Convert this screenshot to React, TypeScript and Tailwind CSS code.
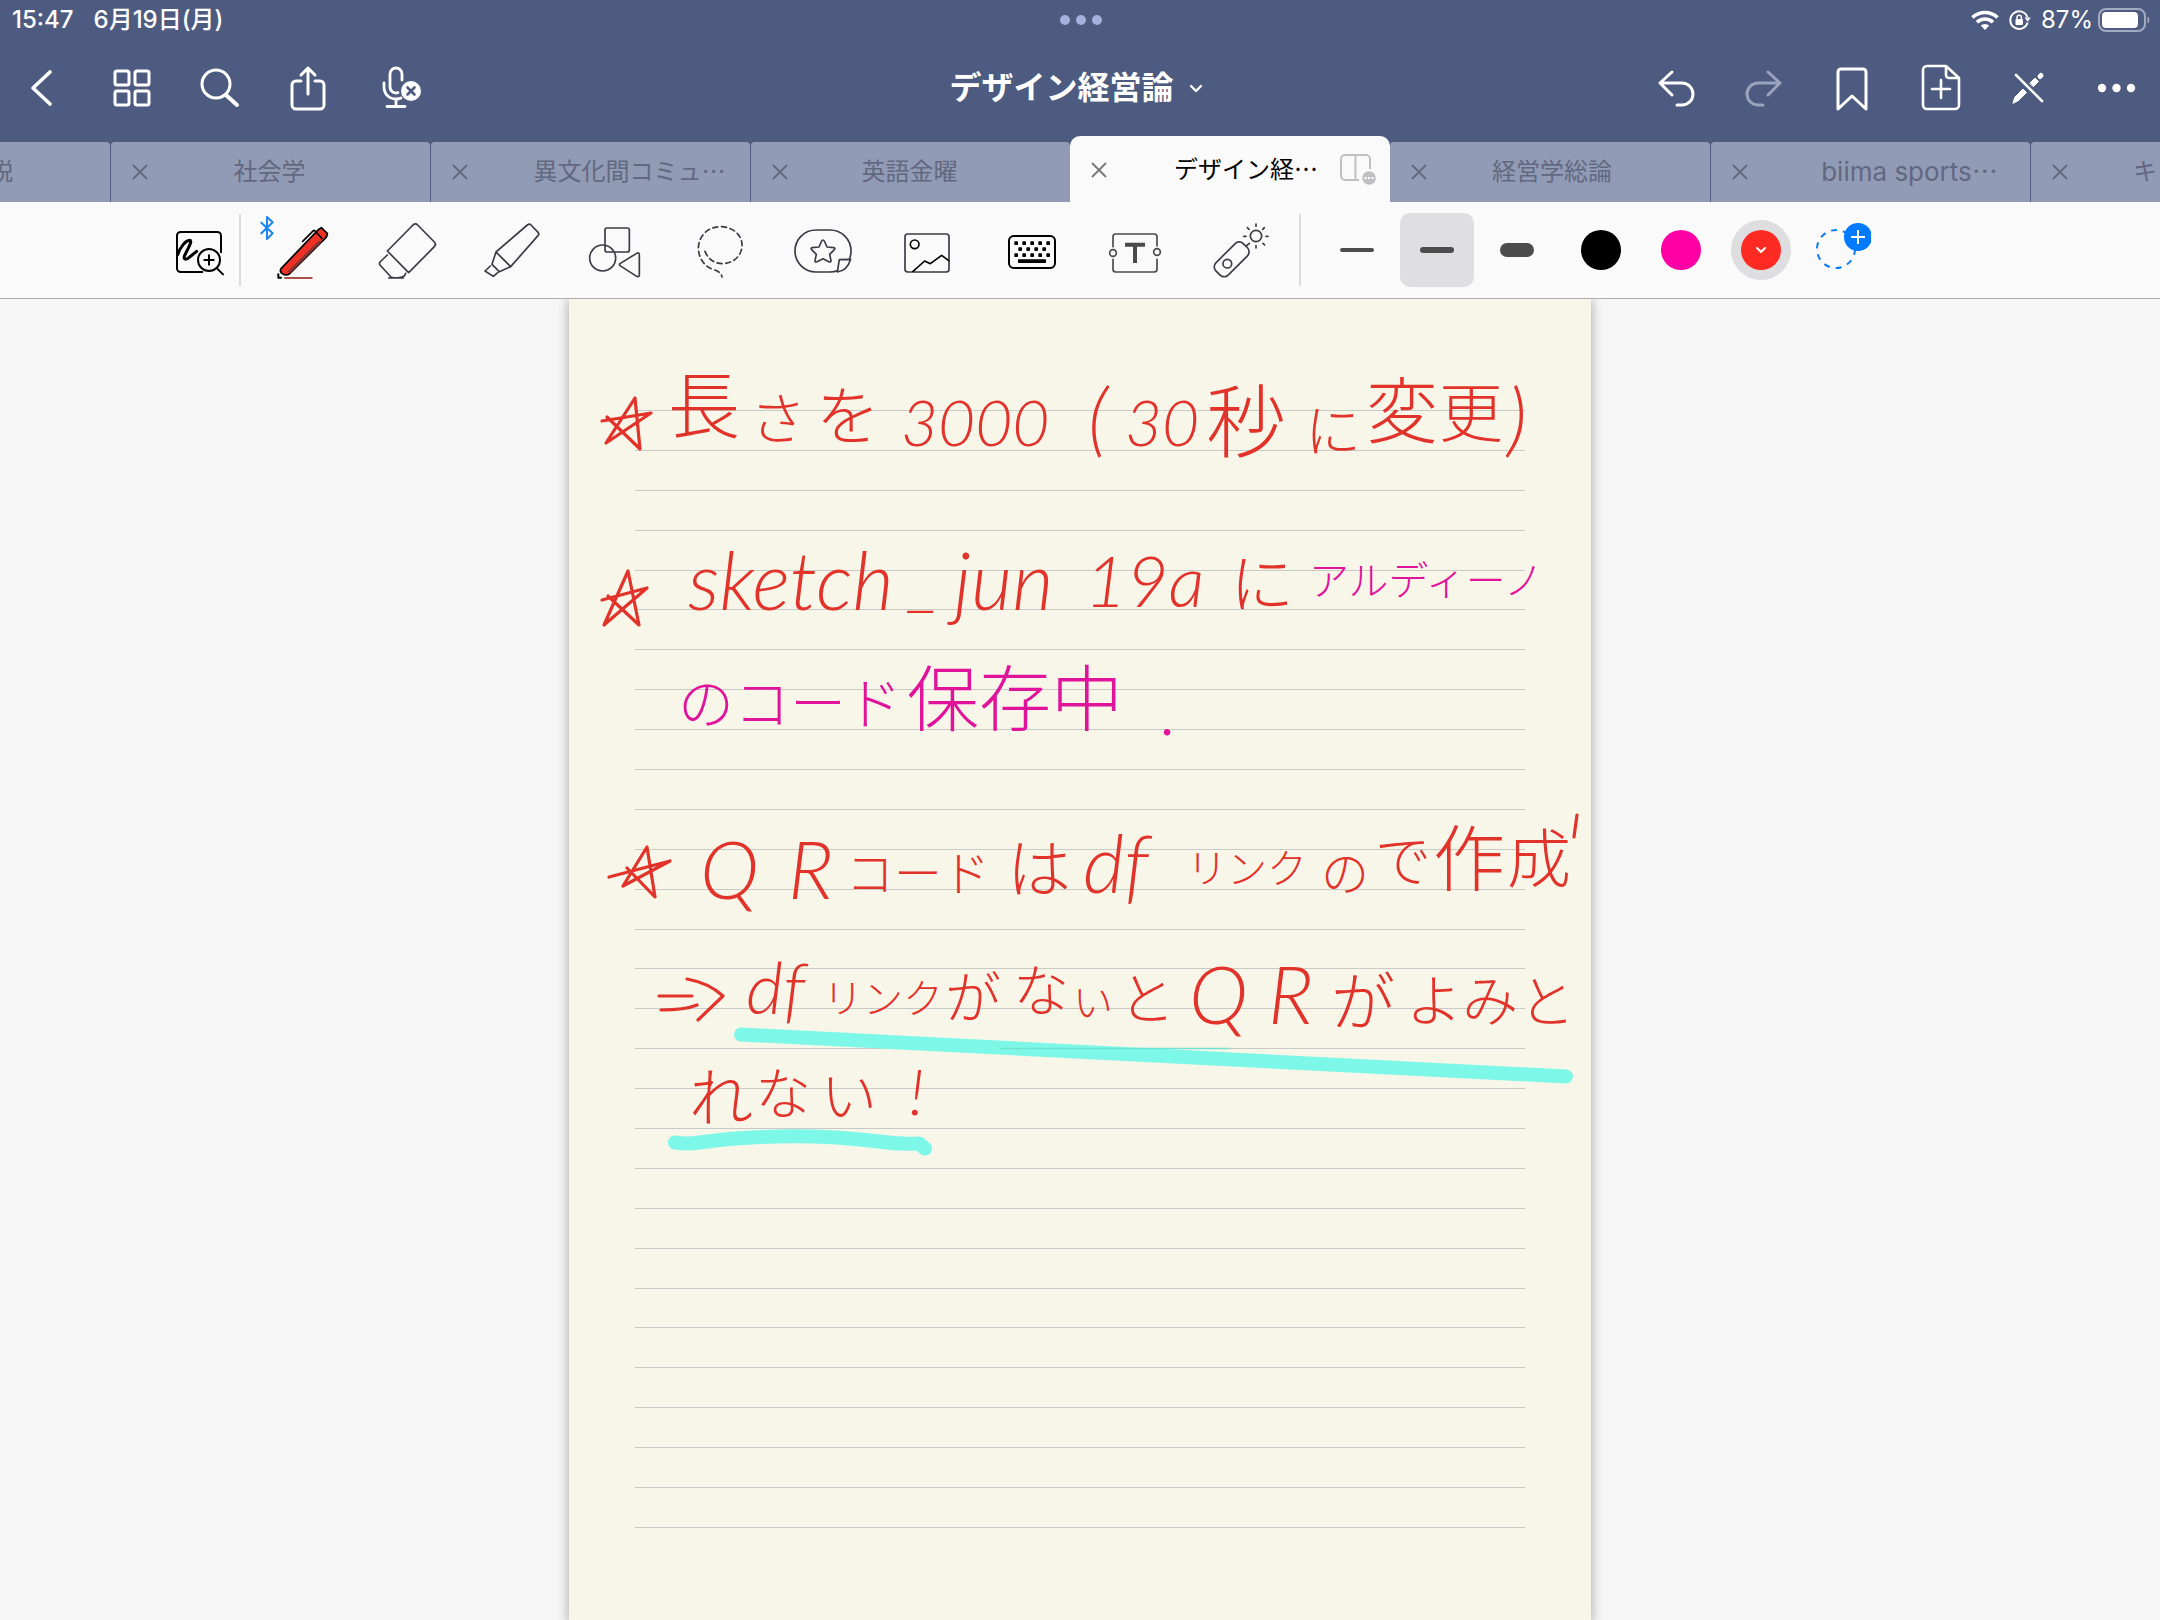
import React from "react";

const JP = "font-['Inter','Noto_Sans_CJK_JP',sans-serif]";

function HeaderButton({ label, children }: { label: string; children: React.ReactNode }) {
  return (
    <button aria-label={label} className="flex h-14 w-[88px] items-center justify-center text-white">
      <svg
        className="size-14"
        viewBox="0 0 56 56"
        fill="none"
        stroke="currentColor"
        strokeWidth="3"
        strokeLinecap="round"
        strokeLinejoin="round"
      >
        {children}
      </svg>
    </button>
  );
}

function StatusBar() {
  return (
    <div className="grid h-10 grid-cols-3 items-center pr-[10px] pl-3 text-[24px] leading-10 font-medium text-white">
      <div className="flex gap-5">
        <span>15:47</span>
        <span>6月19日(月)</span>
      </div>
      <div className="flex justify-center gap-[6px]">
        <i className="size-[10px] rounded-full bg-[#a5b1da]" />
        <i className="size-[10px] rounded-full bg-[#a5b1da]" />
        <i className="size-[10px] rounded-full bg-[#a5b1da]" />
      </div>
      <div className="flex items-center justify-end">
        <svg className="mr-[10px] h-5 w-7" viewBox="0 0 28 20" fill="none" stroke="white" strokeWidth="3.6">
          <path d="M1.5 7.5a18 18 0 0 1 25 0" />
          <path d="M6 12.3a11.5 11.5 0 0 1 16 0" />
          <path d="M14 20l-4.2-4.4a6 6 0 0 1 8.4 0z" fill="white" stroke="none" />
        </svg>
        <svg className="mr-[10px] h-6 w-[22px]" viewBox="0 0 22 24" fill="none" stroke="white" strokeWidth="2">
          <path d="M18.6 14.5a8.8 8.8 0 1 1-.2-5.4" />
          <path d="M15.5 9.5h6.2l-2.9 4.2z" fill="white" stroke="none" />
          <rect x="6.5" y="11" width="7.4" height="6" rx="1" fill="white" stroke="none" />
          <path d="M8 11.5V9.4a2.2 2.2 0 0 1 4.4 0v2.1" strokeWidth="1.5" />
        </svg>
        <span className="font-normal">87%</span>
        <svg className="ml-[5px] h-6 w-[52px]" viewBox="0 0 52 24">
          <rect x="1" y="1" width="46" height="22" rx="7" fill="none" stroke="#a3abc2" strokeWidth="2" />
          <rect x="4" y="4" width="36" height="16" rx="4" fill="white" />
          <path d="M49.500 8.500c2.600 1 2.600 6 0 7z" fill="#a3abc2" />
        </svg>
      </div>
    </div>
  );
}

function Header() {
  return (
    <div className="flex h-24 items-center justify-between text-white">
      <div className="flex flex-1">
        <HeaderButton label="戻る">
          <path d="M34 12L17 28l17 16" strokeWidth="3.6" />
        </HeaderButton>
        <HeaderButton label="サムネイル">
          <rect x="11" y="11" width="14" height="14" rx="2" />
          <rect x="31" y="11" width="14" height="14" rx="2" />
          <rect x="11" y="31" width="14" height="14" rx="2" />
          <rect x="31" y="31" width="14" height="14" rx="2" />
        </HeaderButton>
        <HeaderButton label="検索">
          <circle cx="24" cy="24" r="14" />
          <path d="M34 35l11 10" strokeWidth="4" />
        </HeaderButton>
        <HeaderButton label="共有">
          <path d="M21 21h-5a4 4 0 0 0-4 4v20a4 4 0 0 0 4 4h24a4 4 0 0 0 4-4V25a4 4 0 0 0-4-4h-5M28 34V8M21 15l7-7 7 7" />
        </HeaderButton>
        <HeaderButton label="録音">
          <path d="M34 20v-6a6 6 0 0 0-12 0v13a6 6 0 0 0 8 5.600M16 23v4c0 7 5 12 12 12 2 0 4-.4 5-1M28 39v7M19 46.500h18" strokeWidth="2.800" />
          <circle cx="43" cy="31" r="10" fill="white" stroke="none" />
          <path d="M39.500 27.500l7 7M46.500 27.500l-7 7" stroke="#4e5b80" strokeWidth="2.600" />
        </HeaderButton>
      </div>
      <button className="mr-2 flex items-center gap-[15px]">
        <span className="text-[32px] leading-10 font-bold">デザイン経営論</span>
        <svg className="h-3 w-[14px]" viewBox="0 0 14 12" fill="none" stroke="white" strokeWidth="2.400" strokeLinecap="round" strokeLinejoin="round">
          <path d="M2 4l5 5 5-5" />
        </svg>
      </button>
      <div className="flex flex-1 justify-end">
        <HeaderButton label="取り消す">
          <path d="M24 12L12 23l12 12M12 23h22a11 11 0 0 1 0 22h-5" />
        </HeaderButton>
        <HeaderButton label="やり直す">
          <path d="M32 12l12 11-12 12M44 23H22a11 11 0 0 0 0 22h5" stroke="#9aa3bd" />
        </HeaderButton>
        <HeaderButton label="ブックマーク">
          <path d="M14 49V12a3 3 0 0 1 3-3h22a3 3 0 0 1 3 3v37L28 36z" />
        </HeaderButton>
        <HeaderButton label="ページを追加">
          <path d="M34 6H15a4 4 0 0 0-4 4v35a4 4 0 0 0 4 4h28a4 4 0 0 0 4-4V18zM34 6v9a3 3 0 0 0 3 3h10M29 20v18M20 29h18" strokeWidth="2.600" />
        </HeaderButton>
        <HeaderButton label="閲覧モード">
          <path d="M16 15l26 26" strokeWidth="2.600" />
          <path d="M13 43l2-6 8-8 3.500 3.500-8 8zM30 23l5-5 3.500 3.500-5 5z" fill="white" stroke="white" strokeWidth="1" />
          <path d="M40 16.500l1-1" strokeWidth="5" />
        </HeaderButton>
        <HeaderButton label="その他">
          <g fill="white" stroke="none">
            <circle cx="14" cy="28" r="4.200" />
            <circle cx="28.500" cy="28" r="4.200" />
            <circle cx="43" cy="28" r="4.200" />
          </g>
        </HeaderButton>
      </div>
    </div>
  );
}

function CloseIcon() {
  return (
    <button aria-label="閉じる" className="flex h-[60px] w-[58px] shrink-0 items-center justify-center">
      <svg className="size-4" viewBox="0 0 16 16" stroke="currentColor" strokeWidth="1.800">
        <path d="M1 1l14 14M15 1L1 15" />
      </svg>
    </button>
  );
}

const idle =
  "flex h-[60px] w-80 shrink-0 items-center rounded-t-[4px] border-l border-[#4e5b80] bg-[#929bb5] text-[#616880]";

function Tabs() {
  return (
    <nav className="flex h-[66px] items-end overflow-hidden text-[24px] leading-8">
      <div className="flex h-[60px] w-[110px] shrink-0 items-center rounded-tr-[4px] bg-[#929bb5] text-[#616880]">
        <span className="-ml-[11px]">説</span>
      </div>
      <div className={idle}>
        <CloseIcon />
        <span className="flex-1 pr-[60px] text-center">社会学</span>
      </div>
      <div className={idle}>
        <CloseIcon />
        <span className="flex-1 pl-5 text-center">異文化間コミュ⋯</span>
      </div>
      <div className={idle}>
        <CloseIcon />
        <span className="flex-1 pr-[60px] text-center">英語金曜</span>
      </div>
      <div className="flex h-[66px] w-80 shrink-0 items-center rounded-t-[10px] bg-[#fafafa] pt-[2px] text-black">
        <div className="flex text-[#777]">
          <CloseIcon />
        </div>
        <span className="flex-1 pl-7 text-center">デザイン経⋯</span>
        <button aria-label="分割表示" className="mr-[14px] ml-1 text-[#c0c0c2]">
          <svg className="h-8 w-9" viewBox="0 0 36 32" fill="none" stroke="currentColor" strokeWidth="2">
            <path d="M19 26H5a4 4 0 0 1-4-4V5a4 4 0 0 1 4-4h21a4 4 0 0 1 4 4v10M15.500 1v25" />
            <circle cx="29" cy="24" r="6.800" fill="currentColor" stroke="none" />
            <path d="M24.500 24h2M28 24h2M31.500 24h2" stroke="white" />
          </svg>
        </button>
      </div>
      <div className="flex h-[60px] w-80 shrink-0 items-center rounded-t-[4px] bg-[#929bb5] text-[#616880]">
        <CloseIcon />
        <span className="flex-1 pr-[54px] text-center">経営学総論</span>
      </div>
      <div className={idle}>
        <CloseIcon />
        <span className="flex-1 pl-5 text-center text-[26px]">biima sports⋯</span>
      </div>
      <div className="flex h-[60px] min-w-0 flex-1 items-center overflow-hidden rounded-tl-[4px] border-l border-[#4e5b80] bg-[#929bb5] text-[#616880]">
        <CloseIcon />
        <span className="pl-11 whitespace-nowrap">キ</span>
      </div>
    </nav>
  );
}

function Tool({ label, box, children }: { label: string; box: string; children: React.ReactNode }) {
  return (
    <button aria-label={label} className="flex h-[72px] w-[104px] shrink-0 items-center justify-center">
      <svg
        className="size-[60px] overflow-visible"
        viewBox={box}
        fill="none"
        stroke="#3a3b44"
        strokeWidth="5"
        strokeLinecap="round"
        strokeLinejoin="round"
      >
        {children}
      </svg>
    </button>
  );
}

const keyRows = [
  { y: 94, xs: [1003, 1027, 1051, 1075, 1099] },
  { y: 112, xs: [1015, 1039, 1063, 1087] },
  { y: 130, xs: [1003, 1027, 1051, 1075, 1099] },
];

function Toolbar() {
  return (
    <div className="flex h-[97px] items-center border-b border-[#adadaa] bg-[#fafafa] pl-40">
      <button aria-label="ズーム" className="flex h-[72px] w-[79px] shrink-0 items-center justify-center">
        <svg className="size-[60px]" viewBox="0 30 180 180" fill="none" stroke="black" strokeWidth="6" strokeLinecap="round" strokeLinejoin="round">
          <path d="M97 186H32a11 11 0 0 1-11-11V77a11 11 0 0 1 11-11h110a11 11 0 0 1 11 11v50" />
          <path d="M23 134c8-24 24-42 36-43 12 0-12 36-16 48-3 12 8 10 16 2l21-17" strokeWidth="9" />
          <circle cx="117" cy="150" r="33" />
          <path d="M141 175l18 18M103 150h28M117 136v28" />
        </svg>
      </button>
      <i className="h-[72px] w-[2px] shrink-0 bg-[#dcdcde]" />
      <div className="ml-[10px] flex">
        <Tool label="ペン" box="309 30 180 180">
          <path d="M274 38l34 32-17 17V21l17 16-34 33" stroke="#1a85ee" strokeWidth="6" />
          <path d="M345 204h80" stroke="#a8504c" strokeWidth="6" />
          <path d="M333 176l107-112c5-6 10-9 14-11l18 17c1 6-2 11-8 17L358 192c-14 8-32-4-25-16z" fill="#ed3126" stroke="black" />
          <path d="M360 184L448 97" stroke="#7e3430" strokeWidth="9" />
          <path d="M438 66l18 20M398 94l33-33 8 4" stroke="black" />
          <path d="M325 193v10h8" stroke="black" strokeWidth="6" />
        </Tool>
        <Tool label="消しゴム" box="621 30 180 180">
          <path d="M652 123l77-78c5-4 10-4 14 0l50 51c4 4 4 10 0 14l-77 78zM652 135l-22 21c-2 3-2 6 0 9l33 36c10 4 28 4 40-3l4-8M656 204h44" />
        </Tool>
        <Tool label="蛍光ペン" box="933 30 180 180">
          <path d="M978 126l94-81c4-3 8-3 11 0l22 23c2 3 1 7-1 9l-82 93zM978 126l-12 37 22 22 34-15M961 168l-16 15 25 16 14-12" />
        </Tool>
        <Tool label="図形" box="1245 30 180 180">
          <rect x="1305" y="54" width="73" height="72" rx="6" />
          <circle cx="1298" cy="144" r="39" />
          <path d="M1350 161l50-31c5-3 8-1 8 4v62c0 4-4 5-8 3l-50-32c-2-2-2-4 0-6z" />
        </Tool>
        <Tool label="投げ縄" box="27 30 180 180">
          <path d="M75 124C85 150 106 161 128 161C160 160 187 138 186 103C185 72 155 50 121 50C82 50 55 80 55 116C57 145 72 168 98 178C113 183 124 188 126 201" strokeDasharray="15 11" />
        </Tool>
        <Tool label="ステッカー" box="339 30 180 180">
          <rect x="345" y="60" width="168" height="126" rx="63" />
          <path d="M512 148c-8 26-22 36-40 38l6-37z" fill="#fafafa" />
          <path d="M429 90q3 0 4 3l8 18 20 2q6 1 2 6l-14 14 4 19q0 6-6 3l-18-9-18 9q-6 3-6-3l4-19-14-14q-4-5 2-6l20-2 8-18q1-3 4-3z" />
        </Tool>
        <Tool label="画像" box="651 30 180 180">
          <rect x="675" y="72" width="132" height="114" rx="8" />
          <circle cx="704" cy="103" r="13" stroke="black" />
          <path d="M699 184l35-31 17 8 34-25 21 16" stroke="black" />
        </Tool>
        <Tool label="キーボード" box="963 30 180 180">
          <rect x="987" y="78" width="138" height="96" rx="14" stroke="black" strokeWidth="6" />
          <g fill="black" stroke="none">
            {keyRows.map((r) => r.xs.map((x) => <rect key={`${x}-${r.y}`} x={x} y={r.y} width="11" height="11" rx="2" />))}
            <rect x="1014" y="148" width="84" height="11" rx="2" />
          </g>
        </Tool>
        <Tool label="テキスト" box="1275 30 180 180">
          <path d="M1299 110V80a8 8 0 0 1 8-8h116a8 8 0 0 1 8 8v28M1299 148v30a8 8 0 0 0 8 8h116a8 8 0 0 0 8-8v-30" stroke="#4a4a4c" />
          <circle cx="1299" cy="129" r="10" stroke="#4a4a4c" />
          <circle cx="1431" cy="126" r="10" stroke="#4a4a4c" />
          <path d="M1335 104h60M1365 104v55" stroke="#4a4a4c" strokeWidth="12" strokeLinecap="butt" />
        </Tool>
        <Tool label="レーザー" box="87 300 180 180">
          <rect x="97" y="392" width="116" height="52" rx="17" transform="rotate(-45 155 418)" />
          <circle cx="142" cy="431" r="13" />
          <circle cx="228" cy="348" r="17" />
          <path d="M228 312v7M228 377v7M191 349h7M258 349h6M202 323l5 5M248 328l5-5M249 370l5 5M200 377l8-7" />
        </Tool>
      </div>
      <i className="ml-2 h-[72px] w-[2px] shrink-0 bg-[#dcdcde]" />
      <div className="ml-4 flex items-center">
        <button aria-label="細い線" className="flex h-[74px] w-20 items-center justify-center">
          <i className="h-[4px] w-[34px] rounded-full bg-[#4c4c4c]" />
        </button>
        <button aria-label="中くらいの線" className="mx-[3px] flex size-[74px] items-center justify-center rounded-[10px] bg-[#dfdfe1]">
          <i className="h-[6px] w-[34px] rounded-full bg-[#4c4c4c]" />
        </button>
        <button aria-label="太い線" className="flex h-[74px] w-20 items-center justify-center">
          <i className="h-[14px] w-[34px] rounded-[7px] bg-[#4c4c4c]" />
        </button>
        <div className="ml-1 flex items-center">
          <button aria-label="黒" className="flex h-[74px] w-20 items-center justify-center">
            <i className="size-10 rounded-full bg-black" />
          </button>
          <button aria-label="ピンク" className="flex h-[74px] w-20 items-center justify-center">
            <i className="size-10 rounded-full bg-[#ff00a5]" />
          </button>
          <button aria-label="赤" className="mx-[10px] flex size-[60px] items-center justify-center rounded-full bg-[#dedee0]">
            <i className="flex size-10 items-center justify-center rounded-full bg-[#ff2a22]">
              <svg className="h-2 w-3" viewBox="0 0 12 8" fill="none" stroke="white" strokeWidth="2" strokeLinecap="round" strokeLinejoin="round">
                <path d="M2 2l4 4 4-4" />
              </svg>
            </i>
          </button>
          <button aria-label="色を追加" className="flex h-[74px] w-20 items-center justify-center">
            <svg className="size-[60px]" viewBox="0 0 60 60" fill="none" stroke="#0a7cf0" strokeWidth="2">
              <circle cx="25" cy="29" r="19" strokeDasharray="6 6" />
              <circle cx="47" cy="17" r="14" fill="#007aff" stroke="none" />
              <path d="M40 17h14M47 10v14" stroke="white" />
            </svg>
          </button>
        </div>
      </div>
    </div>
  );
}

const red = "text-[#e2332b]";
const pink = "text-[#e0149a]";
const latin = "font-['Lato'] italic";

const ink: { text: string; at: string; tone: string; face?: string }[] = [
  { text: "長", at: "left-[99px] top-[71px] text-[72px]", tone: red },
  { text: "さ", at: "left-[181px] top-[92px] text-[56px]", tone: red },
  { text: "を", at: "left-[247px] top-[85px] text-[64px]", tone: red },
  { text: "3000", at: "left-[332px] top-[91px] text-[64px]", tone: red, face: latin },
  { text: "(", at: "left-[519px] top-[77px] text-[80px]", tone: red, face: latin },
  { text: "30", at: "left-[556px] top-[91px] text-[64px]", tone: red, face: latin },
  { text: "秒", at: "left-[637px] top-[83px] text-[80px]", tone: red },
  { text: "に", at: "left-[736px] top-[104px] text-[56px]", tone: red },
  { text: "変", at: "left-[797px] top-[76px] text-[72px]", tone: red },
  { text: "更", at: "left-[870px] top-[82px] text-[64px]", tone: red },
  { text: ")", at: "left-[938px] top-[77px] text-[80px]", tone: red, face: latin },

  { text: "sketch", at: "left-[119px] top-[240px] text-[80px]", tone: red, face: latin },
  { text: "_", at: "left-[339px] top-[240px] text-[72px]", tone: red, face: latin },
  { text: "jun", at: "left-[385px] top-[240px] text-[80px]", tone: red, face: latin },
  { text: "19a", at: "left-[516px] top-[244px] text-[72px]", tone: red, face: latin },
  { text: "に", at: "left-[661px] top-[253px] text-[64px]", tone: red },
  { text: "アルディーノ", at: "left-[740px] top-[262px] text-[40px]", tone: pink },

  { text: "のコード", at: "left-[109px] top-[377px] text-[56px]", tone: pink },
  { text: "保存中", at: "left-[338px] top-[364px] text-[72px]", tone: pink },
  { text: ".", at: "left-[592px] top-[372px] text-[72px]", tone: pink, face: latin },

  { text: "Q", at: "left-[131px] top-[529px] text-[80px]", tone: red, face: latin },
  { text: "R", at: "left-[219px] top-[529px] text-[80px]", tone: red, face: latin },
  { text: "コード", at: "left-[277px] top-[551px] text-[48px]", tone: red },
  { text: "は", at: "left-[438px] top-[538px] text-[64px]", tone: red },
  { text: "df", at: "left-[514px] top-[523px] text-[80px]", tone: red, face: latin },
  { text: "リンク", at: "left-[618px] top-[550px] text-[40px]", tone: red },
  { text: "の", at: "left-[752px] top-[551px] text-[48px]", tone: red },
  { text: "で", at: "left-[806px] top-[534px] text-[56px]", tone: red },
  { text: "作", at: "left-[864px] top-[524px] text-[72px]", tone: red },
  { text: "成", at: "left-[938px] top-[528px] text-[64px]", tone: red },

  { text: "df", at: "left-[177px] top-[651px] text-[72px]", tone: red, face: latin },
  { text: "リンク", at: "left-[254px] top-[680px] text-[40px]", tone: red },
  { text: "が", at: "left-[376px] top-[671px] text-[56px]", tone: red },
  { text: "な", at: "left-[444px] top-[664px] text-[56px]", tone: red },
  { text: "い", at: "left-[504px] top-[684px] text-[40px]", tone: red },
  { text: "と", at: "left-[550px] top-[672px] text-[56px]", tone: red },
  { text: "Q", at: "left-[620px] top-[654px] text-[80px]", tone: red, face: latin },
  { text: "R", at: "left-[699px] top-[654px] text-[80px]", tone: red, face: latin },
  { text: "が", at: "left-[762px] top-[671px] text-[64px]", tone: red },
  { text: "よみ", at: "left-[837px] top-[674px] text-[56px]", tone: red },
  { text: "と", at: "left-[950px] top-[675px] text-[56px]", tone: red },

  { text: "れ", at: "left-[120px] top-[767px] text-[64px]", tone: red },
  { text: "な", at: "left-[186px] top-[767px] text-[56px]", tone: red },
  { text: "い", at: "left-[252px] top-[769px] text-[56px]", tone: red },
  { text: "!", at: "left-[340px] top-[760px] text-[64px]", tone: red, face: latin },
];

function NotePage() {
  return (
    <article className="relative w-[1022px] bg-[#f8f6e9] px-[66px] pt-[111px] pb-24 shadow-[0_0_12px_rgba(0,0,0,0.35)]">
      <div className="flex h-[1118px] flex-col justify-between">
        {Array.from({ length: 29 }, (_, i) => (
          <i key={i} className="h-[1px] w-[890px] bg-[#c8cac8]" />
        ))}
      </div>
      <svg
        className="absolute top-0 left-0 h-[1000px] w-[1022px]"
        viewBox="569 299 1022 1000"
        fill="none"
        strokeLinecap="round"
        strokeLinejoin="round"
      >
        <g stroke="#7df7e7" strokeWidth="14">
          <path d="M741 1034.500L1566 1076.500" />
          <path d="M675 1142.500q12 2 24 0q90-12 180-1q18 3 40 2l6 5" />
        </g>
        <path d="M1000 1048.500h230" stroke="#70e2d4" strokeWidth="1.500" strokeLinecap="butt" />
        <g stroke="#e2332b" strokeWidth="3.200">
          <path d="M602 421L651 413 606 443 635 398 640 449 607 417" />
          <path d="M602 600L647 588 604 625 628 571 639 625 608 596" />
          <path d="M609 877L670 861 623 886 647 847 655 897 627 868" />
          <path d="M659 996h33M661 1010q24 0 36-5M687 979q22 4 36 17l-25 24" />
          <path d="M1577 815l-3 22" />
        </g>
      </svg>
      {ink.map((w, i) => (
        <span key={i} className={`absolute leading-none font-light whitespace-nowrap ${w.at} ${w.tone} ${w.face ?? ""}`}>
          {w.text}
        </span>
      ))}
    </article>
  );
}

export default function App() {
  return (
    <div lang="ja" className={`flex min-h-screen flex-col overflow-hidden bg-[#f7f7f7] ${JP}`}>
      <header className="bg-[#4e5b80]">
        <StatusBar />
        <Header />
        <Tabs />
      </header>
      <Toolbar />
      <main className="flex flex-1 justify-center overflow-hidden">
        <NotePage />
      </main>
    </div>
  );
}
